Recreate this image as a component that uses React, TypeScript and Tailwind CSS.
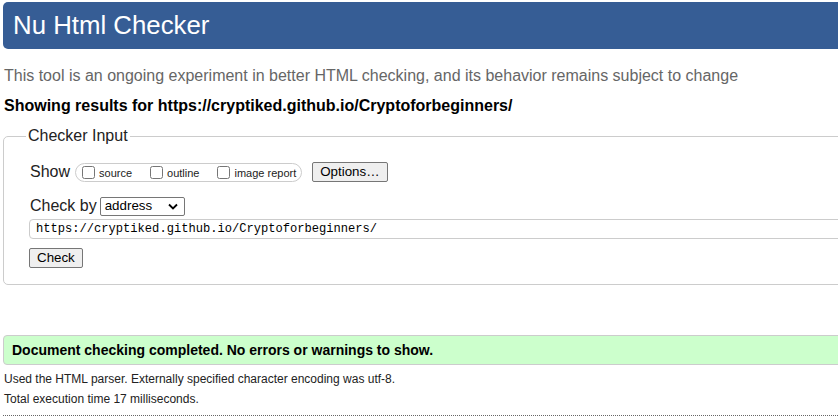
import React from 'react';

const options = ['source', 'outline', 'image report'];

export default function App() {
  return (
    <div className="w-[838px] h-[419px] overflow-hidden bg-white font-['Liberation_Sans',Arial,sans-serif] text-[#222]">
      <div className="w-[900px] pl-[3px] pt-[2px]">
        <header className="h-[47px] bg-[#365d95] rounded-[5px] flex items-center pl-[10px]">
          <h1 className="text-[25.8px] text-white leading-none">Nu Html Checker</h1>
        </header>

        <p className="mt-[17px] pl-[1px] text-[16px] leading-[20px] text-[#666]">
          This tool is an ongoing experiment in better HTML checking, and its behavior remains subject to change
        </p>
        <p className="mt-[10px] pl-[1px] text-[16px] leading-[20px] font-bold text-black">
          Showing results for https://cryptiked.github.io/Cryptoforbeginners/
        </p>

        <fieldset className="mt-[10px] border border-[#ccc] rounded-[5px] pb-[15px]">
          <legend className="ml-[22px] px-[2px] text-[16px] leading-[20px]">Checker Input</legend>

          <div className="pl-[25px]">
            <div className="mt-[15px] h-[22px] flex items-center">
              <span className="text-[16px] leading-[20px] pl-[1px]">Show</span>
              <div className="ml-[5px] h-[19px] flex items-center gap-[18px] border border-[#ccc] rounded-full pl-[6px] pr-[5px]">
                {options.map((o) => (
                  <label key={o} className="flex items-center gap-[4px] text-[11px] leading-none">
                    <input type="checkbox" className="w-[13px] h-[13px] m-0" />
                    <span className="mt-[2px]">{o}</span>
                  </label>
                ))}
              </div>
              <button className="ml-[10px] h-[20px] px-[7px] border border-[#767676] rounded-[2px] bg-[#efefef] text-[13.33px] leading-none text-black">
                Options…
              </button>
            </div>

            <div className="mt-[12px] h-[22px] flex items-center">
              <span className="text-[16px] leading-[20px] pl-[1px]">Check by</span>
              <div className="ml-[3px] w-[85px] h-[19px] flex items-center justify-between border border-[#767676] rounded-[2px] pl-[4px] pr-[6px] text-[13.33px] text-black">
                <span>address</span>
                <svg width="10" height="7" viewBox="0 0 10 7">
                  <path d="M1 1.5 L5 5.5 L9 1.5" fill="none" stroke="#000" strokeWidth="1.8" />
                </svg>
              </div>
            </div>

            <div className="mt-[2px] h-[20px] flex items-center border border-[#ccc] rounded-[4px] pl-[6px] font-['Liberation_Mono',monospace] text-[12.1px] text-black">
              https://cryptiked.github.io/Cryptoforbeginners/
            </div>

            <button className="mt-[9px] h-[20px] px-[7px] border border-[#767676] rounded-[2px] bg-[#efefef] text-[13.33px] leading-none text-black">
              Check
            </button>
          </div>
        </fieldset>

        <div className="mt-[50px] h-[30px] flex items-center bg-[#ccffcc] border border-[#ccc] rounded-[4px] pl-[8px]">
          <span className="text-[14px] font-bold text-black">Document checking completed. No errors or warnings to show.</span>
        </div>

        <p className="pl-[1px] text-[12px] leading-[20px] mt-[4px]">
          Used the HTML parser. Externally specified character encoding was utf-8.
        </p>
        <p className="pl-[1px] text-[12px] leading-[20px]">Total execution time 17 milliseconds.</p>
        <div className="mt-[6px] border-t border-dotted border-[#666]" />
      </div>
    </div>
  );
}
